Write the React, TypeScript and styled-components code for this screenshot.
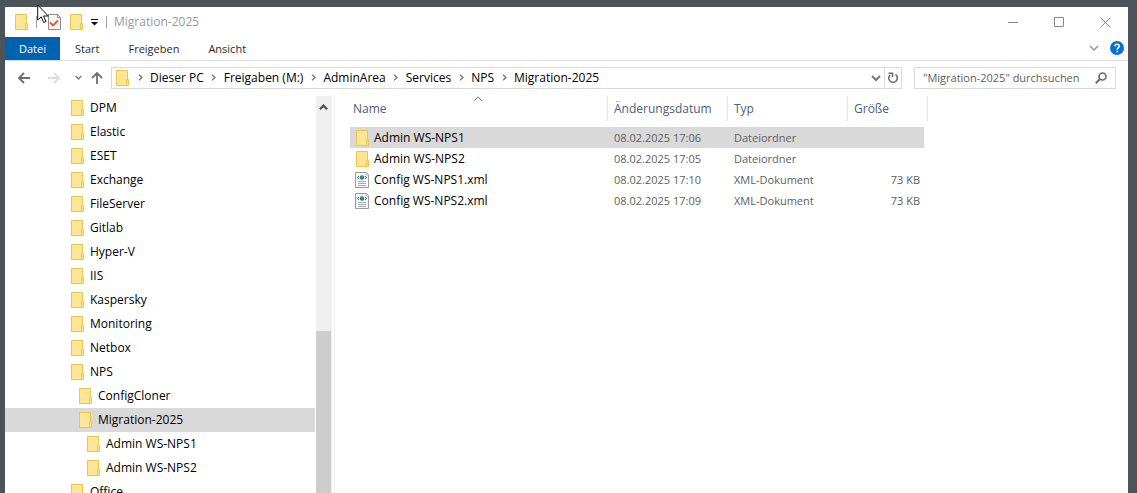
import React from "react";
import styled, { createGlobalStyle } from "styled-components";

const Global = createGlobalStyle`
  * { box-sizing: border-box; }
  html, body { margin: 0; }
  body {
    background: #4c5459;
    font-family: "Open Sans", "Noto Sans", sans-serif;
    font-size: 12px;
    line-height: 16px;
    color: #000;
    overflow: hidden;
  }
  button, input { font: inherit; color: inherit; border: 0; padding: 0; margin: 0; background: none; }
  svg { display: block; flex: none; }
`;

const Desktop = styled.div`
  position: relative;
  height: 100vh;
  padding: 7px 9px 0 5px;
`;
const Win = styled.div`
  height: 100%;
  display: flex;
  flex-direction: column;
  background: #fff;
`;
const TitleBar = styled.header`
  height: 30px;
  flex: none;
  display: flex;
  align-items: center;
  padding-left: 10px;
`;
const IconButton = styled.button<{ $w?: number }>`
  display: flex;
  align-items: center;
  justify-content: center;
  width: ${(p) => p.$w ?? 22}px;
  height: 22px;
  flex: none;
`;
const Divider = styled.span`
  width: 1px;
  height: 12px;
  margin: 0 7px;
  background: #a0a0a0;
`;
const Title = styled.h1`
  flex: 1;
  margin: 0;
  font-size: 12px;
  font-weight: 400;
  color: #999;
`;
const CaptionButton = styled(IconButton)`
  width: 46px;
  height: 30px;
`;
const Ribbon = styled.nav`
  height: 24px;
  flex: none;
  display: flex;
  gap: 1px;
  font-size: 11px;
  border-bottom: 1px solid #dadbdc;
`;
const Tab = styled.button<{ $file?: boolean }>`
  padding: 0 14px;
  background: ${(p) => (p.$file ? "#0063b1" : "transparent")};
  color: ${(p) => (p.$file ? "#fff" : "#2b2b2b")};
`;
const Spacer = styled.div`
  flex: 1;
`;
const NavBar = styled.div`
  flex: none;
  display: flex;
  align-items: center;
  height: 35px;
  padding: 0 12px 2px 8px;
`;
const Address = styled.div`
  flex: 1;
  display: flex;
  align-items: center;
  height: 22px;
  margin-right: 12px;
  border: 1px solid #d9d9d9;
  padding-left: 4px;
`;
const Crumb = styled.button`
  white-space: nowrap;
`;
const CrumbSep = styled.span`
  width: 20px;
  display: flex;
  justify-content: center;
`;
const Refresh = styled(IconButton)`
  width: 17px;
  height: 20px;
  border-left: 1px solid #d9d9d9;
`;
const Search = styled.label`
  display: flex;
  align-items: center;
  width: 202px;
  height: 22px;
  border: 1px solid #d9d9d9;
  padding: 0 8px;
  font-size: 11px;
`;
const SearchInput = styled.input`
  flex: 1;
  min-width: 0;
  outline: 0;
  &::placeholder { color: #606060; opacity: 1; }
`;
const Body = styled.div`
  flex: 1;
  min-height: 0;
  display: flex;
`;
const Side = styled.aside`
  width: 330px;
  flex: none;
  display: flex;
  border-right: 1px solid #f0f0f0;
`;
const Tree = styled.ul`
  flex: 1;
  margin: 0;
  padding: 0;
  list-style: none;
  overflow: hidden;
`;
const TreeItem = styled.button<{ $level: number; $on?: boolean }>`
  width: 100%;
  height: 24px;
  display: flex;
  align-items: center;
  gap: 5px;
  padding-left: ${(p) => 66 + p.$level * 8}px;
  background: ${(p) => (p.$on ? "#d9d9d9" : "transparent")};
`;
const Scroll = styled.div`
  width: 16px;
  margin: 0 2px 0 1px;
  display: flex;
  flex-direction: column;
  background: #f0f0f0;
`;
const Thumb = styled.div`
  flex: 1;
  margin-top: 213px;
  margin-right: 1px;
  background: #cdcdcd;
`;
const Main = styled.main`
  flex: 1;
  padding-left: 15px;
  overflow: hidden;
`;
const Table = styled.table`
  width: 578px;
  table-layout: fixed;
  border-collapse: collapse;
`;
const Th = styled.th`
  height: 31px;
  padding: 0;
  vertical-align: top;
  text-align: left;
  font-weight: 400;
`;
const HeadButton = styled.button<{ $first?: boolean }>`
  position: relative;
  width: 100%;
  height: 25px;
  padding-left: ${(p) => (p.$first ? 3 : 6)}px;
  text-align: left;
  color: #4c607a;
  border-right: 1px solid #e5e5e5;
`;
const SortMark = styled.span`
  position: absolute;
  top: -2px;
  left: 50%;
  margin-left: -6px;
`;
const Td = styled.td<{ $on?: boolean; $right?: boolean }>`
  height: 21px;
  padding: 0 ${(p) => (p.$right ? 4 : 0)}px 0 6px;
  text-align: ${(p) => (p.$right ? "right" : "left")};
  font-size: 11px;
  color: #606060;
  background: ${(p) => (p.$on ? "#d9d9d9" : "transparent")};
`;
const NameTd = styled(Td)`
  padding-left: 5px;
  font-size: 12px;
  color: #000;
`;
const FileName = styled.div`
  display: flex;
  align-items: center;
  gap: 4px;
`;
const IconSlot = styled.span`
  width: 15px;
  display: flex;
  justify-content: flex-end;
`;
const Pointer = styled.div`
  position: absolute;
  left: 37px;
  top: 4px;
`;

const Folder = () => (
  <svg width="14" height="16" viewBox="0 0 14 16">
    <path d="M.5.5H11.5V15.5H.5Z" fill="#ffe694" stroke="#ecc64a" />
    <path d="M10.5 9.5h2v6h-2z" fill="#ffe694" stroke="#ecc64a" />
  </svg>
);
const XmlFile = () => (
  <svg width="15" height="16" viewBox="0 0 15 16">
    <path d="M.5.5H11.5L13.5 2.5V15.5H.5Z" fill="#fafafa" stroke="#9a9a9a" />
    <path d="M11 .5V3h2.5" fill="none" stroke="#b5b5b5" />
    <path d="M4 4L2.500 5.500 4 7M10 4l1.500 1.500L10 7" fill="none" stroke="#555" />
    <circle cx="7" cy="5.500" r="2.300" fill="#2b7ab5" />
    <circle cx="7.500" cy="5" r="1" fill="#3fa36b" />
    <path d="M3 9.500h8M3 11.500h8M3 13.500h8" stroke="#aaa" />
  </svg>
);
const Chevron = ({ dir = "down", size = 8, color = "#777", w = 1.5 }: { dir?: string; size?: number; color?: string; w?: number }) => {
  const d = { down: "M1 3l4 4 4-4", up: "M1 7l4-4 4 4", right: "M3 1l4 4-4 4" }[dir];
  return (
    <svg width={size} height={size} viewBox="0 0 10 10">
      <path d={d} fill="none" stroke={color} strokeWidth={w} />
    </svg>
  );
};
const Arrow = ({ color, turn = 0 }: { color: string; turn?: number }) => (
  <svg width="14" height="14" viewBox="0 0 14 14">
    <path d="M13 7H2M7 2L2 7l5 5" fill="none" stroke={color} strokeWidth="1.8" transform={`rotate(${turn} 7 7)`} />
  </svg>
);

const crumbs = ["Dieser PC", "Freigaben (M:)", "AdminArea", "Services", "NPS", "Migration-2025"];
const tree: [string, number][] = [
  ["DPM", 0], ["Elastic", 0], ["ESET", 0], ["Exchange", 0], ["FileServer", 0], ["Gitlab", 0],
  ["Hyper-V", 0], ["IIS", 0], ["Kaspersky", 0], ["Monitoring", 0], ["Netbox", 0], ["NPS", 0],
  ["ConfigCloner", 1], ["Migration-2025", 1], ["Admin WS-NPS1", 2], ["Admin WS-NPS2", 2], ["Office", 0],
];
const files = [
  { name: "Admin WS-NPS1", date: "08.02.2025 17:06", type: "Dateiordner", size: "" },
  { name: "Admin WS-NPS2", date: "08.02.2025 17:05", type: "Dateiordner", size: "" },
  { name: "Config WS-NPS1.xml", date: "08.02.2025 17:10", type: "XML-Dokument", size: "73 KB" },
  { name: "Config WS-NPS2.xml", date: "08.02.2025 17:09", type: "XML-Dokument", size: "73 KB" },
];

export default function App() {
  return (
    <Desktop>
      <Global />
      <Win>
        <TitleBar>
          <Folder />
          <Divider />
          <IconButton $w={20} aria-label="Eigenschaften">
            <svg width="13" height="16" viewBox="0 0 13 16">
              <path d="M.5.5H9.500L12.500 3.500V15.500H.5Z" fill="#f7f7f7" stroke="#8c8c8c" />
              <path d="M9.500.5v3h3" fill="none" stroke="#8c8c8c" />
              <path d="M2 8.500l3 3L10 6.500" fill="none" stroke="#e8591c" strokeWidth="1.8" />
            </svg>
          </IconButton>
          <IconButton $w={25} aria-label="Neuer Ordner"><Folder /></IconButton>
          <IconButton $w={10} aria-label="Symbolleiste anpassen">
            <svg width="7" height="8" viewBox="0 0 7 8">
              <path d="M0 1h7v1H0zM0 4h7L3.500 7.500z" fill="#111" />
            </svg>
          </IconButton>
          <Divider />
          <Title>Migration-2025</Title>
          <CaptionButton aria-label="Minimieren">
            <svg width="10" height="10"><path d="M0 5.500h10" stroke="#888" /></svg>
          </CaptionButton>
          <CaptionButton aria-label="Maximieren">
            <svg width="10" height="10"><path d="M.5.5h9v9h-9z" fill="none" stroke="#888" /></svg>
          </CaptionButton>
          <CaptionButton aria-label="Schließen">
            <svg width="11" height="11"><path d="M.5.5l10 10M10.500.5l-10 10" stroke="#888" /></svg>
          </CaptionButton>
        </TitleBar>
        <Ribbon>
          <Tab $file>Datei</Tab>
          <Tab>Start</Tab>
          <Tab>Freigeben</Tab>
          <Tab>Ansicht</Tab>
          <Spacer />
          <IconButton aria-label="Menüband erweitern"><Chevron size={10} color="#999" /></IconButton>
          <IconButton aria-label="Hilfe">
            <svg width="14" height="14" viewBox="0 0 14 14">
              <circle cx="7" cy="7" r="7" fill="#0a6fd0" />
              <path d="M5 5.300C5 2.600 9.200 2.700 9.200 5.200 9.200 6.800 7.200 6.600 7.200 8.600" fill="none" stroke="#fff" strokeWidth="1.6" />
              <path d="M6.400 9.700h1.600v1.600H6.400z" fill="#fff" />
            </svg>
          </IconButton>
        </Ribbon>
        <NavBar>
          <IconButton aria-label="Zurück"><Arrow color="#6e6e6e" /></IconButton>
          <IconButton $w={38} aria-label="Vorwärts"><Arrow color="#dcdcdc" turn={180} /></IconButton>
          <IconButton $w={10} aria-label="Zuletzt besucht"><Chevron size={7} w={2} /></IconButton>
          <IconButton $w={28} aria-label="Nach oben"><Arrow color="#6e6e6e" turn={90} /></IconButton>
          <Address>
            <Folder />
            {crumbs.map((c) => (
              <React.Fragment key={c}>
                <CrumbSep><Chevron dir="right" size={7} w={2} /></CrumbSep>
                <Crumb>{c}</Crumb>
              </React.Fragment>
            ))}
            <Spacer />
            <IconButton $w={16} aria-label="Vorherige Orte"><Chevron size={10} w={2} /></IconButton>
            <Refresh aria-label="Aktualisieren">
              <svg width="12" height="12" viewBox="0 0 12 12">
                <path d="M8.500 2.500A4.300 4.300 0 1 1 3 3" fill="none" stroke="#6e6e6e" strokeWidth="1.6" />
                <path d="M1.500 1.200h4v4" fill="none" stroke="#6e6e6e" strokeWidth="1.6" />
              </svg>
            </Refresh>
          </Address>
          <Search>
            <SearchInput aria-label="Suchen" placeholder={'"Migration-2025" durchsuchen'} />
            <svg width="12" height="12" viewBox="0 0 12 12">
              <circle cx="7.500" cy="4.500" r="3.500" fill="none" stroke="#6e6e6e" strokeWidth="1.7" />
              <path d="M5 7L.8 11.200" stroke="#6e6e6e" strokeWidth="2" />
            </svg>
          </Search>
        </NavBar>
        <Body>
          <Side>
            <Tree>
              {tree.map(([name, level]) => (
                <li key={name}>
                  <TreeItem $level={level} $on={name === "Migration-2025"}><Folder />{name}</TreeItem>
                </li>
              ))}
            </Tree>
            <Scroll>
              <IconButton $w={15} aria-label="Nach oben scrollen"><Chevron dir="up" size={9} color="#505050" w={2.5} /></IconButton>
              <Thumb />
            </Scroll>
          </Side>
          <Main>
            <Table>
              <colgroup>
                <col width="258" /><col width="120" /><col width="120" /><col width="76" /><col width="4" />
              </colgroup>
              <thead>
                <tr>
                  <Th><HeadButton $first>Name<SortMark><Chevron dir="up" size={10} w={1} /></SortMark></HeadButton></Th>
                  <Th><HeadButton>Änderungsdatum</HeadButton></Th>
                  <Th><HeadButton>Typ</HeadButton></Th>
                  <Th colSpan={2}><HeadButton>Größe</HeadButton></Th>
                </tr>
              </thead>
              <tbody>
                {files.map((f, i) => (
                  <tr key={f.name}>
                    <NameTd $on={i === 0}>
                      <FileName><IconSlot>{f.size ? <XmlFile /> : <Folder />}</IconSlot>{f.name}</FileName>
                    </NameTd>
                    <Td $on={i === 0}>{f.date}</Td>
                    <Td $on={i === 0}>{f.type}</Td>
                    <Td $on={i === 0} $right>{f.size}</Td>
                  </tr>
                ))}
              </tbody>
            </Table>
          </Main>
        </Body>
      </Win>
      <Pointer>
        <svg width="13" height="20" viewBox="0 0 13 20">
          <path d="M.7 1v15l3.500-3.200 2.500 5.700 2.300-1-2.500-5.500h4.800z" fill="#fff" stroke="#111" />
        </svg>
      </Pointer>
    </Desktop>
  );
}
